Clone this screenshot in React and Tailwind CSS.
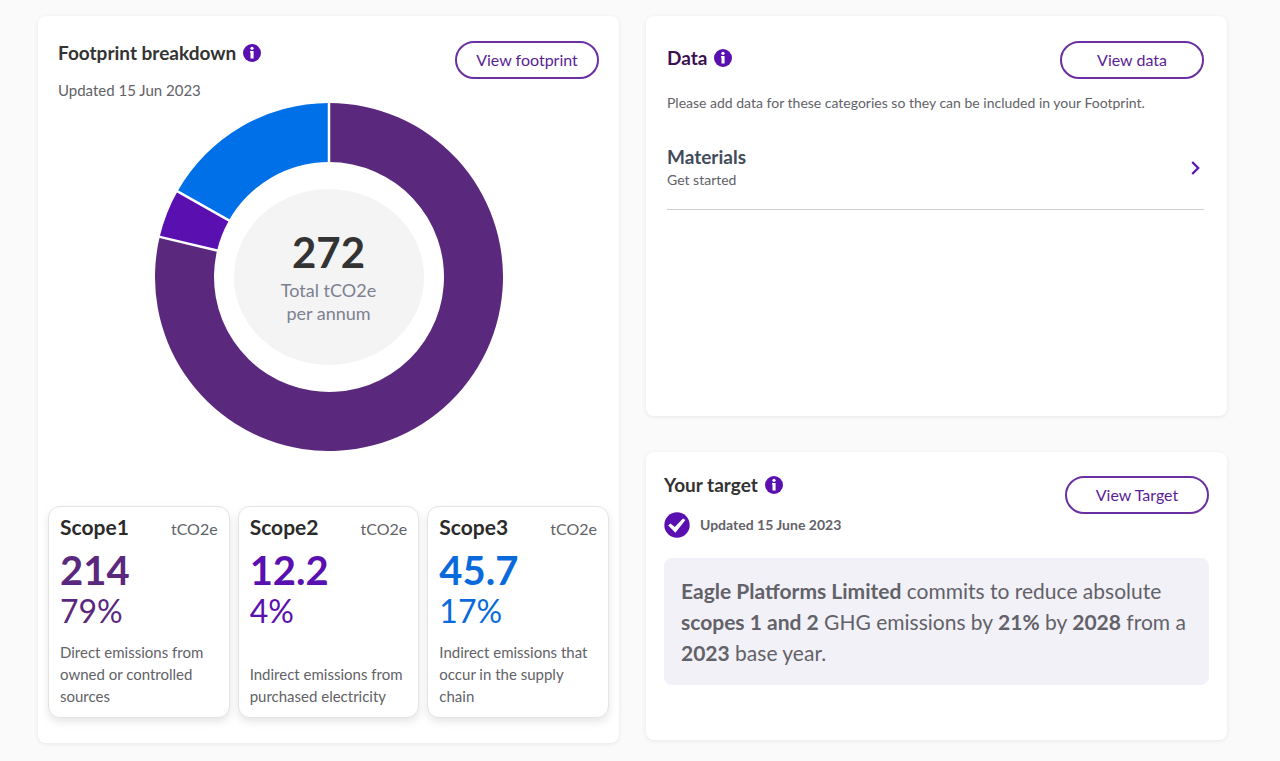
// App.jsx
const SCOPES = [
  {
    name: "Scope1",
    value: 214,
    percent: "79%",
    description: "Direct emissions from owned or controlled sources",
    color: "#5a287d",
    text: "text-[#5a287d]",
  },
  {
    name: "Scope2",
    value: 12.2,
    percent: "4%",
    description: "Indirect emissions from purchased electricity",
    color: "#5a0fb0",
    text: "text-[#5a0fb0]",
  },
  {
    name: "Scope3",
    value: 45.7,
    percent: "17%",
    description: "Indirect emissions that occur in the supply chain",
    color: "#0070e8",
    text: "text-[#0a6adb]",
  },
];

function InfoIcon() {
  return (
    <svg viewBox="0 0 18 18" className="size-[18px] shrink-0" role="img" aria-label="More info">
      <circle cx="9" cy="9" r="9" fill="#5a0fb0" />
      <circle cx="9" cy="4.3" r="1.6" fill="#fff" />
      <path d="M7 7h3.6v7.6H7.5V8.5H7z" fill="#fff" />
    </svg>
  );
}

function CheckIcon() {
  return (
    <svg viewBox="0 0 26 26" className="size-[26px] shrink-0" aria-hidden="true">
      <circle cx="13" cy="13" r="12.7" fill="#5a0fb0" />
      <path d="M4.2 13.4l2.2-1.9 4.4 3.6 8.2-8.6 2.4 1.6-10 12.6z" fill="#fff" />
    </svg>
  );
}

function PillButton({ children }) {
  return (
    <button
      type="button"
      className="h-[38px] w-36 shrink-0 rounded-full border-2 border-[#6a2fa0] bg-white text-base text-[#5a1e96] hover:bg-purple-50"
    >
      {children}
    </button>
  );
}

function Card({ children, className = "" }) {
  return <section className={`rounded-lg bg-white shadow-[0_1px_4px_rgba(0,0,0,0.08)] ${className}`}>{children}</section>;
}

function CardTitle({ children, className = "text-[#333333]" }) {
  return (
    <div className="flex items-center gap-[7px]">
      <h2 className={`text-[19px] leading-[18px] font-bold ${className}`}>{children}</h2>
      <InfoIcon />
    </div>
  );
}

// Slices run clockwise from 12 o'clock
function Donut({ items }) {
  const size = 348;
  const c = size / 2;
  const outer = 174;
  const inner = 115;
  const total = items.reduce((sum, item) => sum + item.value, 0);

  const point = (r, share) => {
    const a = share * 2 * Math.PI;
    return `${c + r * Math.sin(a)} ${c - r * Math.cos(a)}`;
  };

  let from = 0;
  const slices = items.map((item) => {
    const start = from;
    const end = start + item.value / total;
    from = end;
    const large = end - start > 0.5 ? 1 : 0;
    return {
      name: item.name,
      color: item.color,
      start,
      d: `M${point(outer, start)} A${outer} ${outer} 0 ${large} 1 ${point(outer, end)} L${point(inner, end)} A${inner} ${inner} 0 ${large} 0 ${point(inner, start)}Z`,
    };
  });

  return (
    <div className="grid place-items-center">
      <svg viewBox={`0 0 ${size} ${size}`} className="col-start-1 row-start-1 size-[348px]" aria-hidden="true">
        {slices.map((s) => (
          <path key={s.name} d={s.d} fill={s.color} />
        ))}
        {slices.map((s) => (
          <path key={s.name} d={`M${point(inner - 1, s.start)} L${point(outer + 1, s.start)}`} stroke="#fff" strokeWidth="2.5" />
        ))}
        <ellipse cx={c} cy={c} rx="95" ry="88" fill="#f4f4f4" />
      </svg>
      <div className="col-start-1 row-start-1 text-center">
        <p className="text-[42px] leading-[46px] font-bold text-[#333333]">{Math.round(total)}</p>
        <p className="mt-1 text-lg leading-[23px] text-[#7d8190]">
          Total tCO2e
          <br />
          per annum
        </p>
      </div>
    </div>
  );
}

function ScopeCard({ scope }) {
  return (
    <article className="flex flex-col rounded-xl border border-[#e4e4e6] bg-white px-[11px] pt-2 pb-2.5 shadow-[0_4px_8px_rgba(0,0,0,0.1)]">
      <header className="flex items-baseline justify-between">
        <h3 className="text-[21px] leading-6 font-bold text-[#2b2b2b]">{scope.name}</h3>
        <span className="text-base leading-6 text-[#626268]">tCO2e</span>
      </header>
      <p className={`mt-1.5 text-[40px] leading-[46px] font-bold ${scope.text}`}>{scope.value}</p>
      <p className={`text-[32px] leading-9 ${scope.text}`}>{scope.percent}</p>
      <p className="mt-auto pt-3 text-[15px] leading-[22px] text-[#626268]">{scope.description}</p>
    </article>
  );
}

function FootprintCard() {
  return (
    <Card className="px-2.5 pt-[25px] pb-[25px]">
      <header className="flex items-start justify-between px-2.5">
        <div className="pt-[3px]">
          <CardTitle>Footprint breakdown</CardTitle>
          <p className="mt-[18px] text-[15px] leading-5 text-[#626268]">Updated 15 Jun 2023</p>
        </div>
        <PillButton>View footprint</PillButton>
      </header>
      <div className="mt-[3px]">
        <Donut items={SCOPES} />
      </div>
      <div className="mt-[55px] grid grid-cols-3 gap-2">
        {SCOPES.map((scope) => (
          <ScopeCard key={scope.name} scope={scope} />
        ))}
      </div>
    </Card>
  );
}

function DataCard() {
  return (
    <Card className="min-h-[400px] pt-[25px] pr-[23px] pl-[21px]">
      <header className="flex items-start justify-between">
        <div className="pt-2">
          <CardTitle className="text-[#3c1053]">Data</CardTitle>
        </div>
        <PillButton>View data</PillButton>
      </header>
      <p className="mt-[14px] text-sm leading-5 text-[#626268]">
        Please add data for these categories so they can be included in your Footprint.
      </p>
      <a href="#materials" className="mt-8 flex items-center justify-between border-b border-[#cfcfd2] pr-1 pb-[18px]">
        <div>
          <h3 className="text-[19px] leading-6 font-bold text-[#414b5a]">Materials</h3>
          <p className="text-sm leading-[22px] text-[#626268]">Get started</p>
        </div>
        <svg viewBox="0 0 9 14" className="h-3.5 w-[9px]" aria-hidden="true">
          <path d="M1.2 1l6 6-6 6" fill="none" stroke="#5a0fb0" strokeWidth="2.2" />
        </svg>
      </a>
    </Card>
  );
}

function TargetCard() {
  return (
    <Card className="min-h-[288px] px-[18px] pt-6">
      <header className="flex items-start justify-between">
        <div>
          <CardTitle>Your target</CardTitle>
          <p className="mt-[18px] flex items-center gap-2.5 text-sm leading-[26px] font-bold text-[#626268]">
            <CheckIcon />
            Updated 15 June 2023
          </p>
        </div>
        <PillButton>View Target</PillButton>
      </header>
      <p className="mt-5 rounded-lg bg-[#f2f1f8] p-[17px] text-[21px] leading-[31px] text-[#626268]">
        <b>Eagle Platforms Limited</b> commits to reduce absolute <b>scopes 1 and 2</b> GHG emissions by <b>21%</b> by{" "}
        <b>2028</b> from a <b>2023</b> base year.
      </p>
    </Card>
  );
}

export default function App() {
  return (
    <main className="grid min-h-screen grid-cols-2 items-start gap-[27px] bg-[#fafafa] pt-4 pr-[53px] pb-4 pl-[38px] font-['Lato',sans-serif]">
      <FootprintCard />
      <div className="grid gap-9">
        <DataCard />
        <TargetCard />
      </div>
    </main>
  );
}
